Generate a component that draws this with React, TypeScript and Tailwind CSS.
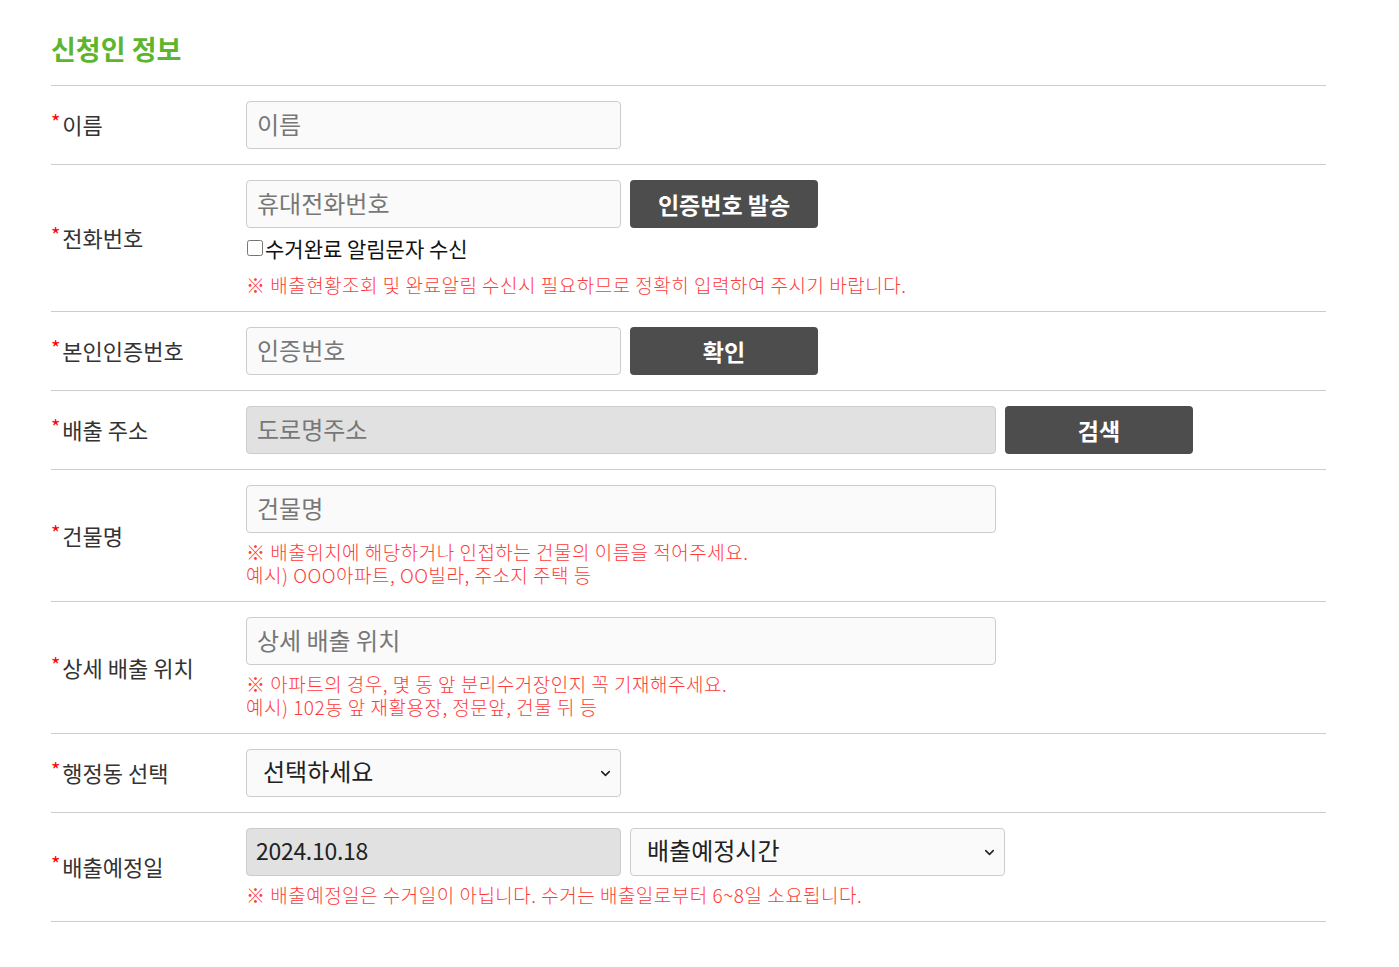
import { ChevronDown } from 'lucide-react'

const font = { fontFamily: '"Noto Sans CJK KR", "Noto Sans", sans-serif' }

function Label({ children }: { children: React.ReactNode }) {
  return (
    <div className="w-[195px] shrink-0 flex items-center pb-[3px]">
      <span className="text-[22px] leading-none text-[#333]">
        <span className="text-[#ff0000] text-[20px] align-[4px] mr-[2px]">*</span>
        {children}
      </span>
    </div>
  )
}

function Field({ placeholder, wide, disabled }: { placeholder: string; wide?: boolean; disabled?: boolean }) {
  return (
    <input
      placeholder={placeholder}
      disabled={disabled}
      className={`${wide ? 'w-[750px]' : 'w-[375px]'} h-[48px] rounded-[4px] border border-[#cccccc] ${disabled ? 'bg-[#e1e1e1]' : 'bg-[#fafafa]'} px-[10px] pb-[4px] text-[24px] text-[#333] placeholder:text-[#777] outline-none`}
    />
  )
}

function Btn({ children }: { children: React.ReactNode }) {
  return (
    <button className="w-[188px] h-[48px] rounded-[4px] bg-[#4d4d4d] text-white text-[23px] font-bold">
      {children}
    </button>
  )
}

function Select({ label }: { label: string }) {
  return (
    <div className="w-[375px] h-[48px] rounded-[4px] border border-[#cccccc] bg-[#fafafa] flex items-center justify-between pl-[16px] pr-[7px]">
      <span className="text-[24px] text-[#222] pb-[4px]">{label}</span>
      <ChevronDown size={15} strokeWidth={2.5} className="text-[#222]" />
    </div>
  )
}

function Note({ children }: { children: React.ReactNode }) {
  return <p className="text-[19px] leading-[23px] tracking-[0.5px] text-[#ff3a3a] font-light">{children}</p>
}

function Row({ children, label }: { children: React.ReactNode; label: string }) {
  return (
    <div className="flex border-b border-[#cccccc] py-[15px]">
      <Label>{label}</Label>
      <div className="flex flex-col">{children}</div>
    </div>
  )
}

export default function App() {
  return (
    <div className="min-h-[967px] bg-white" style={font}>
      <div className="ml-[51px] w-[1275px] pt-[30px]">
        <h2 className="text-[27px] leading-[38px] font-bold text-[#5db52e] mb-[17px]">신청인 정보</h2>
        <div className="border-t border-[#cccccc]">
          <Row label="이름">
            <Field placeholder="이름" />
          </Row>
          <Row label="전화번호">
            <div className="flex gap-[9px]">
              <Field placeholder="휴대전화번호" />
              <Btn>인증번호 발송</Btn>
            </div>
            <label className="mt-[10px] flex items-center text-[21px] leading-[20px] text-[#111]">
              <input type="checkbox" className="w-[16px] h-[16px] mr-[2px] ml-[1px]" />
              수거완료 알림문자 수신
            </label>
            <div className="mt-[15px]">
              <Note>※ 배출현황조회 및 완료알림 수신시 필요하므로 정확히 입력하여 주시기 바랍니다.</Note>
            </div>
          </Row>
          <Row label="본인인증번호">
            <div className="flex gap-[9px]">
              <Field placeholder="인증번호" />
              <Btn>확인</Btn>
            </div>
          </Row>
          <Row label="배출 주소">
            <div className="flex gap-[9px]">
              <Field placeholder="도로명주소" wide disabled />
              <Btn>검색</Btn>
            </div>
          </Row>
          <Row label="건물명">
            <Field placeholder="건물명" wide />
            <div className="mt-[7px]">
              <Note>
                ※ 배출위치에 해당하거나 인접하는 건물의 이름을 적어주세요.
                <br />
                예시) OOO아파트, OO빌라, 주소지 주택 등
              </Note>
            </div>
          </Row>
          <Row label="상세 배출 위치">
            <Field placeholder="상세 배출 위치" wide />
            <div className="mt-[7px]">
              <Note>
                ※ 아파트의 경우, 몇 동 앞 분리수거장인지 꼭 기재해주세요.
                <br />
                예시) 102동 앞 재활용장, 정문앞, 건물 뒤 등
              </Note>
            </div>
          </Row>
          <Row label="행정동 선택">
            <Select label="선택하세요" />
          </Row>
          <Row label="배출예정일">
            <div className="flex gap-[9px]">
              <div className="w-[375px] h-[48px] rounded-[4px] border border-[#cccccc] bg-[#e1e1e1] flex items-center px-[9px] pb-[3px] text-[23px] tracking-[-0.3px] text-[#222]">
                2024.10.18
              </div>
              <Select label="배출예정시간" />
            </div>
            <div className="mt-[7px]">
              <Note>※ 배출예정일은 수거일이 아닙니다. 수거는 배출일로부터 6~8일 소요됩니다.</Note>
            </div>
          </Row>
        </div>
      </div>
    </div>
  )
}
